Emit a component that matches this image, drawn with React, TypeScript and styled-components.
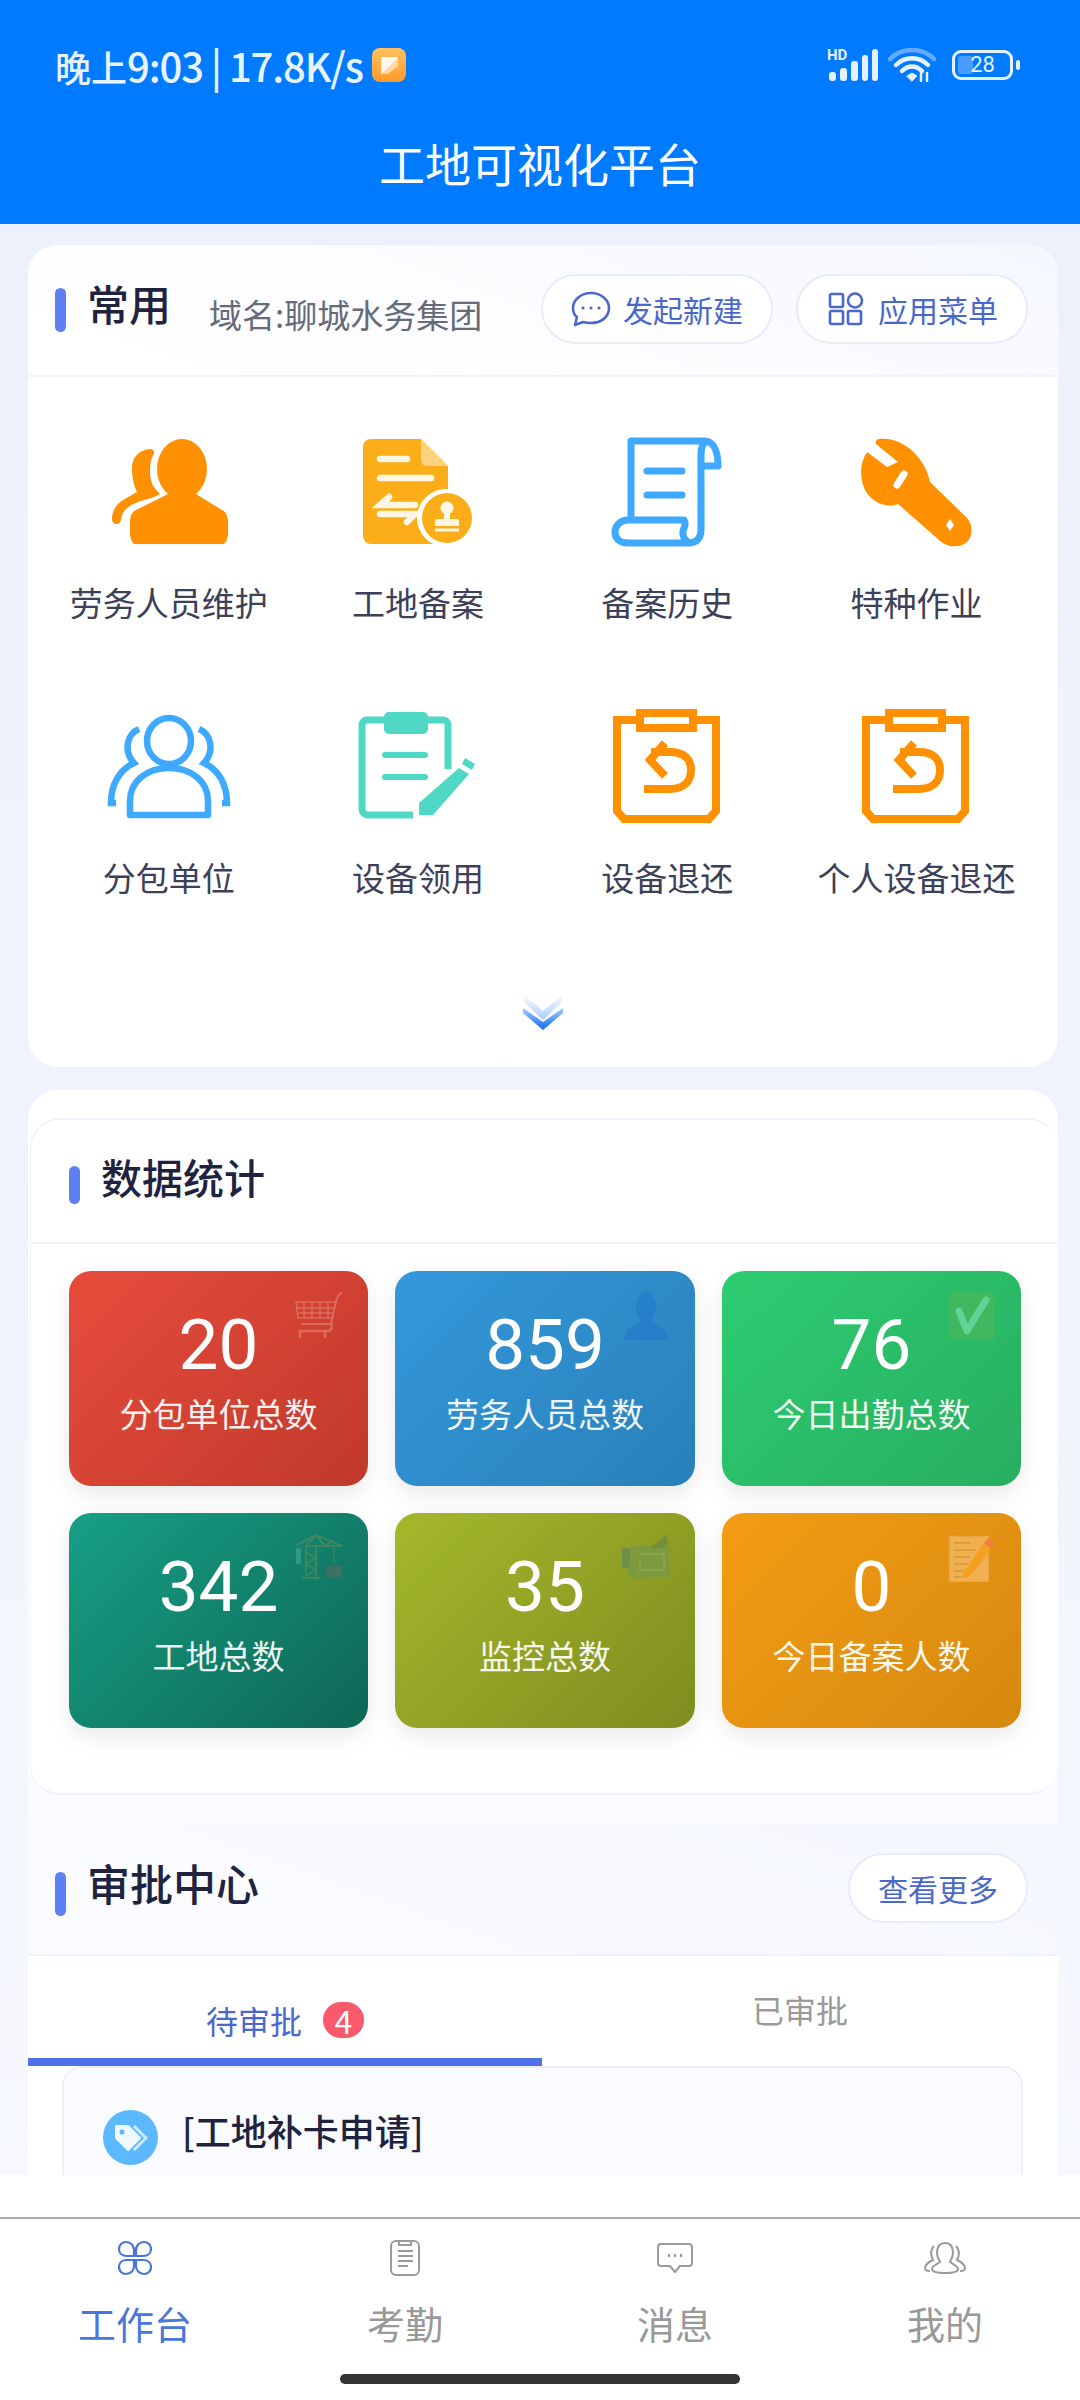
import React from "react";
import styled, { createGlobalStyle } from "styled-components";

const GlobalStyle = createGlobalStyle`
  html, body {
    margin: 0;
    padding: 0;
    background: #fff;
    font-family: "Noto Sans CJK SC", "Noto Sans", sans-serif;
  }
`;

const orange = "#ff9100";
const sky = "#3fa9ff";
const teal = "#4fd9c4";

function PeopleOrange() {
  return (
    <svg width="130" height="120" viewBox="0 0 130 120">
      <ellipse cx="78" cy="35" rx="25" ry="30" fill={orange} />
      <path
        d="M64 60 L32 76 C28 78 26 82 26 88 V100 C26 104 28 108 30 110 H120 C122 108 124 104 124 100 V88 C124 82 122 78 118 76 L92 60Z"
        fill={orange}
      />
      <path
        d="M46 15 C34 16 28 24 28 34 C28 44 30 52 33 58 C24 64 8 68 8 85 C8 91 16 92 17 86 C18 76 24 72 34 68 C42 65 50 64 56 60 C50 54 47 50 46 40 C46 30 47 24 50 20 C51 17 49 15 46 15Z"
        fill={orange}
      />
    </svg>
  );
}

function SiteRecord() {
  return (
    <svg width="130" height="120" viewBox="0 0 130 120">
      <path d="M18 5 H68 L95 32 V110 H18 a8 8 0 0 1-8-8 V13 a8 8 0 0 1 8-8Z" fill="#fbae17" />
      <path d="M68 5 L95 32 H74 a6 6 0 0 1-6-6Z" fill="#fdd27f" />
      <g stroke="#fff7e4" strokeWidth="6.5" strokeLinecap="round" fill="none">
        <path d="M27 25 H54" />
        <path d="M27 44 H78" />
        <path d="M36 63 L27 71 H62" />
        <path d="M27 80 H62 L54 88" />
      </g>
      <circle cx="93" cy="84" r="29" fill="#fff" />
      <circle cx="94" cy="84" r="25" fill="#fbae17" />
      <circle cx="94" cy="74" r="6.5" fill="#fff7e4" />
      <path d="M91 78 H97 V85 H104 a2 2 0 0 1 2 2 V92 H82 V87 a2 2 0 0 1 2-2 H91Z" fill="#fff7e4" />
      <path d="M82 96 H106" stroke="#fff7e4" strokeWidth="3" />
    </svg>
  );
}

function Scroll() {
  return (
    <svg width="130" height="120" viewBox="0 0 130 120" fill="none" stroke={sky} strokeWidth="7" strokeLinejoin="round">
      <path d="M29 86 V7 H102 C112 7 116 18 116 32 H99 V22 C99 14 100 10 105 7" />
      <path d="M99 32 V96 C99 105 94 109 86 109 H26 C17 109 13 104 13 98 C13 92 18 86 26 86 H82 C85 90 82 93 81 97 C80 103 84 109 90 109" />
      <path d="M45 37 H80 M45 61 H80" strokeLinecap="round" />
    </svg>
  );
}

function Wrench() {
  return (
    <svg width="130" height="120" viewBox="0 0 130 120">
      <path
        d="M28 5 C50 2 74 22 79 48 L116 84 C122 91 122 102 116 108 C110 114 96 114 88 106 L47 70 C36 74 22 70 14 56 C9 46 8 30 16 18 L36 33 L47 28 L25 10 C24 7 26 5 28 5Z"
        fill={orange}
      />
      <path d="M53 40 L46 51" stroke="#fff" strokeWidth="7" strokeLinecap="round" />
      <path d="M99 85 L103 91 L99 97 L95 91Z" fill="#fff" />
    </svg>
  );
}

function PeopleOutline() {
  return (
    <svg width="130" height="120" viewBox="0 0 130 120" fill="none" stroke={sky} strokeWidth="6.5">
      <ellipse cx="65" cy="32" rx="22" ry="23" />
      <path d="M26 106 V92 C26 72 43 59 65 59 C87 59 104 72 104 92 V106Z" strokeLinejoin="round" />
      <path d="M35 20 C23 25 19 42 30 54 C15 61 7 76 7 94 H12" />
      <path d="M95 20 C107 25 111 42 100 54 C115 61 123 76 123 94 H118" />
    </svg>
  );
}

function ClipboardPen() {
  return (
    <svg width="130" height="120" viewBox="0 0 130 120" fill="none">
      <path
        d="M31 11 H14 a5 5 0 0 0-5 5 V100 a6 6 0 0 0 6 6 H60 M75 11 H90 a5 5 0 0 1 5 5 V60"
        stroke={teal}
        strokeWidth="7"
      />
      <rect x="31" y="3" width="44" height="22" rx="5" fill={teal} />
      <path d="M32 46 H72 M32 68 H72" stroke={teal} strokeWidth="6" strokeLinecap="round" />
      <path d="M106 59 L116 65 L80 106 H66 V94Z" fill={teal} />
      <path d="M112 49 L122 55 L119 61 L109 55Z" fill={teal} />
    </svg>
  );
}

function ClipboardReturn() {
  return (
    <svg width="130" height="120" viewBox="0 0 130 120" fill="none" stroke={orange}>
      <path d="M34 11 H15 V102 L22 110 H107 L114 102 V11 H95" strokeWidth="8" />
      <rect x="38" y="4" width="53" height="15" strokeWidth="8" fill="#fff" />
      <path d="M42 80 H68 C82 80 89 72 89 61 C89 50 82 43 68 43 H49" strokeWidth="8" />
      <path d="M63 34 L48 51 L63 67" strokeWidth="8" />
    </svg>
  );
}

function ExpandChevron() {
  return (
    <svg width="42" height="36" viewBox="0 0 42 36" fill="none">
      <defs>
        <linearGradient id="chevronFade" x1="0" y1="0" x2="0" y2="1">
          <stop offset="0" stopColor="#0a6cf0" stopOpacity="0.02" />
          <stop offset="1" stopColor="#0a6cf0" stopOpacity="0.35" />
        </linearGradient>
        <linearGradient id="chevronSolid" x1="0" y1="0" x2="0" y2="1">
          <stop offset="0" stopColor="#a8cdfb" />
          <stop offset="1" stopColor="#0a6cf0" />
        </linearGradient>
      </defs>
      <path d="M2 1 L21 17 L40 1 L40 8 L21 26 L2 8Z" fill="url(#chevronFade)" />
      <path d="M1 14 L21 28 L41 14 L41 19 L21 36 L1 19Z" fill="url(#chevronSolid)" />
    </svg>
  );
}

const tiles = [
  { label: "劳务人员维护", icon: <PeopleOrange /> },
  { label: "工地备案", icon: <SiteRecord /> },
  { label: "备案历史", icon: <Scroll /> },
  { label: "特种作业", icon: <Wrench /> },
  { label: "分包单位", icon: <PeopleOutline /> },
  { label: "设备领用", icon: <ClipboardPen /> },
  { label: "设备退还", icon: <ClipboardReturn /> },
  { label: "个人设备退还", icon: <ClipboardReturn /> },
];

function CartMark() {
  return (
    <svg width="48" height="48" viewBox="0 0 48 48" fill="none" stroke="#f0a9a0" strokeWidth="2" opacity="0.4">
      <path d="M47 1 C43 2 42 5 41 9 L36 32 H6" />
      <path d="M1 10 H41 L37 26 H3Z M1 16 H39 M2 21 H38 M9 10 V26 M17 10 V26 M25 10 V26 M33 10 V26" strokeWidth="1.5" />
      <path d="M36 32 C38 36 36 39 32 39 H5 V46 M30 39 V46" strokeWidth="2.5" />
    </svg>
  );
}

function PersonMark() {
  return (
    <svg width="48" height="48" viewBox="0 0 48 48" fill="#1f78cc" opacity="0.55">
      <ellipse cx="24" cy="15" rx="10" ry="15" />
      <path d="M19 28 H29 L44 40 L46 48 H2 L4 40Z" />
    </svg>
  );
}

function CheckMark() {
  return (
    <svg width="48" height="48" viewBox="0 0 48 48">
      <rect x="1" y="0" width="46" height="48" rx="5" fill="#3fb85f" />
      <path d="M11 19 L19 39 L38 8" stroke="#63d395" strokeWidth="7" fill="none" strokeLinecap="round" strokeLinejoin="round" />
    </svg>
  );
}

function CraneMark() {
  return (
    <svg width="50" height="46" viewBox="0 0 50 46" fill="none" stroke="#4a8a5c" strokeWidth="2" opacity="0.8">
      <path d="M13 12 H49 L23 1 L2 12 M13 12 L23 1 L32 12 L40 6 M13 12 V44 M23 12 V44 M13 18 L23 24 L13 30 L23 36 L13 42 M9 44 H27" />
      <path d="M41 12 V30" strokeWidth="1" />
      <rect x="33" y="32" width="16" height="11" fill="#4a6f62" stroke="none" />
      <rect x="3" y="14" width="5" height="16" fill="#3c9d8d" stroke="none" />
    </svg>
  );
}

function CameraMark() {
  return (
    <svg width="48" height="44" viewBox="0 0 48 44">
      <rect x="6" y="12" width="41" height="32" rx="5" fill="#7d9a3f" />
      <rect x="0" y="14" width="8" height="20" rx="3" fill="#6c9146" />
      <path d="M28 14 L40 4 L44 0 L46 10 L38 14Z" fill="#758d3a" />
      <path d="M18 20 H42 V36 H18 V28" stroke="#8ca548" strokeWidth="2" fill="none" />
    </svg>
  );
}

function MemoMark() {
  return (
    <svg width="48" height="48" viewBox="0 0 48 48">
      <rect x="1" y="2" width="40" height="46" fill="#f0b050" stroke="#dd9a3e" />
      <path d="M6 9 H22 M6 16 H28 M6 23 H22 M6 30 H20 M6 37 H16 M6 43 H14" stroke="#c98a2e" strokeWidth="1.2" />
      <path d="M40 4 L47 10 L22 42 L15 45 L16 37Z" fill="#f5a01e" />
      <path d="M40 4 L47 10 L43 15 L36 9Z" fill="#ef7f3c" />
    </svg>
  );
}

const stats = [
  { value: "20", label: "分包单位总数", from: "#e74c3c", to: "#c0392b", mark: <CartMark /> },
  { value: "859", label: "劳务人员总数", from: "#3498db", to: "#2980b9", mark: <PersonMark /> },
  { value: "76", label: "今日出勤总数", from: "#2ecc71", to: "#27ae60", mark: <CheckMark /> },
  { value: "342", label: "工地总数", from: "#16a085", to: "#0e6655", mark: <CraneMark /> },
  { value: "35", label: "监控总数", from: "#a4b82c", to: "#7f8c1f", mark: <CameraMark /> },
  { value: "0", label: "今日备案人数", from: "#f39c12", to: "#d68910", mark: <MemoMark /> },
];

function SignalIcon() {
  return (
    <svg width="52" height="42" viewBox="0 -4 52 42" fill="#e6f1ff">
      <rect x="2" y="24" width="7" height="9" rx="3" />
      <rect x="13" y="20" width="7" height="13" rx="3" />
      <rect x="24" y="13" width="7" height="20" rx="3" />
      <rect x="35" y="7" width="6" height="26" rx="3" />
      <rect x="45" y="1" width="6" height="32" rx="3" />
      <text x="0" y="12" fontSize="15" fontWeight="700" fontFamily="Roboto, sans-serif">HD</text>
    </svg>
  );
}

function WifiIcon() {
  return (
    <svg width="48" height="34" viewBox="0 0 48 34" fill="none" strokeLinecap="round">
      <path d="M2 11 C14 -1 34 -1 46 11" stroke="#66abff" strokeWidth="4.5" />
      <path d="M8 17 C17 8 31 8 40 17" stroke="#e6f1ff" strokeWidth="4.5" />
      <path d="M14 23 C20 17 28 17 34 23" stroke="#e6f1ff" strokeWidth="4.5" />
      <path d="M19 28 L24 25 L29 28 L24 33Z" fill="#e6f1ff" stroke="#e6f1ff" />
      <path d="M33 33 V25 M39 33 V25" stroke="#e6f1ff" strokeWidth="2.5" />
    </svg>
  );
}

function NoteBadge() {
  return (
    <svg width="34" height="34" viewBox="0 0 34 34">
      <defs>
        <linearGradient id="noteBg" x1="0" y1="0" x2="0" y2="1">
          <stop offset="0" stopColor="#ffc25e" />
          <stop offset="1" stopColor="#ff9a2a" />
        </linearGradient>
      </defs>
      <rect width="34" height="34" rx="8" fill="url(#noteBg)" />
      <path d="M9 9 H26 V18 L15 26 H9Z" fill="#fff" opacity="0.9" />
      <path d="M9 26 L26 10 V18 L16 26Z" fill="#ffd9a1" />
    </svg>
  );
}

function ChatIcon() {
  return (
    <svg width="40" height="36" viewBox="0 0 40 36" fill="none" stroke="#4a68cc" strokeWidth="2.6">
      <path d="M20 2 C30 2 38 9 38 17 C38 26 30 32 20 32 C17 32 14 31.5 12 31 L4 34 L6 26 C3 24 2 21 2 17 C2 9 10 2 20 2Z" strokeLinejoin="round" />
      <circle cx="12" cy="17" r="1.6" fill="#4a68cc" stroke="none" />
      <circle cx="20" cy="17" r="1.6" fill="#4a68cc" stroke="none" />
      <circle cx="28" cy="17" r="1.6" fill="#4a68cc" stroke="none" />
    </svg>
  );
}

function MenuIcon() {
  return (
    <svg width="40" height="34" viewBox="-2 0 40 34" fill="none" stroke="#4a68cc" strokeWidth="2.6">
      <rect x="2" y="2" width="13" height="13" rx="1.5" />
      <circle cx="27" cy="8.5" r="7" />
      <rect x="2" y="19" width="13" height="13" rx="1.5" />
      <rect x="20" y="19" width="13" height="13" rx="1.5" />
    </svg>
  );
}

function TagIcon() {
  return (
    <svg width="34" height="30" viewBox="0 0 34 30">
      <path d="M2 3 H14 L26 15 L14 27 L2 15Z" fill="#fff" opacity="0.9" strokeLinejoin="round" stroke="#fff" strokeWidth="2" />
      <circle cx="8" cy="9" r="2.5" fill="#5cb9ff" />
      <path d="M20 3 L32 15 L20 27" stroke="#fff" opacity="0.7" strokeWidth="3" fill="none" />
    </svg>
  );
}

function PetalIcon() {
  return (
    <svg width="34" height="36" viewBox="0 0 34 36" fill="none" stroke="#4a76d9" strokeWidth="2.2">
      <path d="M16 16 H9 C4 16 1 13 1 9 C1 5 4 2 8 2 C13 2 16 6 16 10Z" />
      <path d="M18 16 H25 C30 16 33 13 33 9 C33 5 30 2 26 2 C21 2 18 6 18 10Z" />
      <path d="M16 20 H9 C4 20 1 23 1 27 C1 31 4 34 8 34 C13 34 16 30 16 26Z" />
      <path d="M18 20 H25 C30 20 33 23 33 27 C33 31 30 34 26 34 C21 34 18 30 18 26Z" />
    </svg>
  );
}

function ReportIcon() {
  return (
    <svg width="30" height="36" viewBox="0 0 30 36" fill="none" stroke="#9a9a9a" strokeWidth="2">
      <rect x="1" y="1" width="28" height="34" rx="5" />
      <path d="M9 1 V5 H21 V1 M8 11 H23 M8 16 H23 M8 21 H23 M8 26 H18" />
    </svg>
  );
}

function BubbleIcon() {
  return (
    <svg width="36" height="30" viewBox="0 0 36 30" fill="none" stroke="#9a9a9a" strokeWidth="2">
      <path d="M4 1 H32 a3 3 0 0 1 3 3 V20 a3 3 0 0 1-3 3 H23 L18 29 L13 23 H4 a3 3 0 0 1-3-3 V4 a3 3 0 0 1 3-3Z" strokeLinejoin="round" />
      <path d="M12 12 V13 M18 12 V13 M24 12 V13" strokeWidth="2.4" strokeLinecap="round" />
    </svg>
  );
}

function GroupIcon() {
  return (
    <svg width="42" height="32" viewBox="0 0 42 32" fill="none" stroke="#9a9a9a" strokeWidth="2">
      <path d="M21 1 C27 1 29 6 29 11 C29 15 27 18 26 20 C30 23 34 24 34 27 C34 30 28 31 21 31 C14 31 8 30 8 27 C8 24 12 23 16 20 C15 18 13 15 13 11 C13 6 15 1 21 1Z" />
      <path d="M10 4 C6 8 7 14 9 18 C5 20 1 22 1 26 C1 28 3 29 6 29 M32 4 C36 8 35 14 33 18 C37 20 41 22 41 26 C41 28 39 29 36 29" />
    </svg>
  );
}

const navItems = [
  { label: "工作台", active: true, icon: <PetalIcon /> },
  { label: "考勤", active: false, icon: <ReportIcon /> },
  { label: "消息", active: false, icon: <BubbleIcon /> },
  { label: "我的", active: false, icon: <GroupIcon /> },
];

export default function App() {
  return (
    <Page>
      <GlobalStyle />
      <TopBar>
        <StatusBar>
          <StatusLeft>
            <StatusText>
              晚上<StatusDigits>9:03 | 17.8K/s</StatusDigits>
            </StatusText>
            <NoteBadge />
          </StatusLeft>
          <StatusRight>
            <SignalIcon />
            <WifiIcon />
            <Battery>
              <BatteryFill />
              <BatteryText>28</BatteryText>
            </Battery>
            <BatteryNub />
          </StatusRight>
        </StatusBar>
        <PageTitle>工地可视化平台</PageTitle>
      </TopBar>

      <Content>
        <Card>
          <CardHeader>
            <TitleBar />
            <SectionTitle $size={42} $lift={15}>常用</SectionTitle>
            <Domain>域名:聊城水务集团</Domain>
            <HeaderActions>
              <PillButton>
                <ChatIcon />
                发起新建
              </PillButton>
              <PillButton>
                <MenuIcon />
                应用菜单
              </PillButton>
            </HeaderActions>
          </CardHeader>
          <TileGrid>
            {tiles.map((tile) => (
              <Tile key={tile.label}>
                {tile.icon}
                <TileLabel>{tile.label}</TileLabel>
              </Tile>
            ))}
          </TileGrid>
          <ExpandRow>
            <ExpandChevron />
          </ExpandRow>
        </Card>

        <OuterCard>
          <StatsPanel>
            <StatsHeader>
              <TitleBar $drop={8} $height={38} />
              <SectionTitle $size={41} $lift={10}>数据统计</SectionTitle>
            </StatsHeader>
            <StatsGrid>
              {stats.map((stat) => (
                <StatTile key={stat.label} $from={stat.from} $to={stat.to}>
                  <StatMark>{stat.mark}</StatMark>
                  <StatValue>{stat.value}</StatValue>
                  <StatLabel>{stat.label}</StatLabel>
                </StatTile>
              ))}
            </StatsGrid>
          </StatsPanel>

          <ApprovalHeader>
            <TitleBar $drop={9} />
            <SectionTitle $size={43} $lift={14}>审批中心</SectionTitle>
            <HeaderActions>
              <PillButton>查看更多</PillButton>
            </HeaderActions>
          </ApprovalHeader>
          <TabRow>
            <TabItem $active>
              待审批
              <CountBadge>4</CountBadge>
            </TabItem>
            <TabItem>已审批</TabItem>
          </TabRow>
          <ApprovalBody>
            <ApprovalItem>
              <TagCircle>
                <TagIcon />
              </TagCircle>
              <ApprovalTitle>[工地补卡申请]</ApprovalTitle>
            </ApprovalItem>
          </ApprovalBody>
        </OuterCard>
      </Content>

      <BottomArea>
        <NavBar>
          {navItems.map((item) => (
            <NavItem key={item.label} $active={item.active}>
              <NavIcon>{item.icon}</NavIcon>
              {item.label}
            </NavItem>
          ))}
        </NavBar>
        <HomeBar />
      </BottomArea>
    </Page>
  );
}

const Page = styled.div`
  width: 1080px;
  height: 2400px;
  display: flex;
  flex-direction: column;
  overflow: hidden;
  background: #fff;
`;

const TopBar = styled.header`
  height: 224px;
  flex: none;
  box-sizing: border-box;
  padding-top: 44px;
  background: #007bff;
  color: #fff;
`;

const StatusBar = styled.div`
  height: 42px;
  display: flex;
  align-items: center;
  justify-content: space-between;
  padding: 0 60px 0 55px;
`;

const StatusLeft = styled.div`
  display: flex;
  align-items: center;
  gap: 9px;
`;

const StatusText = styled.span`
  font-size: 36px;
  line-height: 42px;
  font-weight: 500;
  color: #e8f3ff;
  white-space: nowrap;
`;

const StatusDigits = styled.span`
  font-size: 40px;
  letter-spacing: -1.1px;
`;

const StatusRight = styled.div`
  display: flex;
  align-items: center;
  gap: 9px;
`;

const Battery = styled.div`
  position: relative;
  width: 61px;
  height: 30px;
  margin-left: 7px;
  box-sizing: border-box;
  border: 3px solid #e6f1ff;
  border-radius: 9px;
  display: flex;
  align-items: center;
  justify-content: center;
`;

const BatteryFill = styled.div`
  position: absolute;
  left: 3px;
  top: 3px;
  bottom: 3px;
  width: 15px;
  border-radius: 3px;
  background: #4a9cff;
`;

const BatteryText = styled.span`
  position: relative;
  font-family: Roboto, sans-serif;
  font-size: 22px;
  line-height: 24px;
  color: #e6f1ff;
`;

const BatteryNub = styled.div`
  width: 4px;
  height: 10px;
  margin-left: -6px;
  border-radius: 2px;
  background: #e6f1ff;
`;

const PageTitle = styled.h1`
  margin: 46px 0 0;
  text-align: center;
  font-size: 46px;
  line-height: 60px;
  font-weight: 400;
  color: #fff;
`;

const Content = styled.main`
  height: 1951px;
  flex: none;
  box-sizing: border-box;
  padding: 21px 22px 0 28px;
  overflow: hidden;
  background: linear-gradient(180deg, #edf1fc 0%, #f0f3fc 45%, #f6f8fe 100%);
`;

const Card = styled.section`
  height: 822px;
  box-sizing: border-box;
  border-radius: 30px;
  background: #fff;
  overflow: hidden;
`;

const CardHeader = styled.div`
  height: 132px;
  box-sizing: border-box;
  display: flex;
  align-items: center;
  padding: 0 30px 0 27px;
  border-bottom: 2px solid #f0f3fb;
  background: linear-gradient(200deg, #f4f7fe 0%, #fdfdff 60%, #fff 100%);
`;

const TitleBar = styled.span<{ $drop?: number; $height?: number }>`
  flex: none;
  width: 11px;
  height: ${(p) => p.$height ?? 44}px;
  margin-top: ${(p) => p.$drop ?? 0}px;
  border-radius: 6px;
  background: #5c7ff2;
`;

const SectionTitle = styled.h2<{ $size: number; $lift: number }>`
  margin: ${(p) => -p.$lift}px 0 0 21px;
  font-size: ${(p) => p.$size}px;
  line-height: 56px;
  font-weight: 500;
  color: #1f2340;
  white-space: nowrap;
`;

const Domain = styled.span`
  margin: 8px 0 0 38px;
  font-size: 33px;
  line-height: 44px;
  color: #666b78;
  white-space: nowrap;
`;

const HeaderActions = styled.div`
  margin-left: auto;
  margin-top: -2px;
  display: flex;
  gap: 23px;
`;

const PillButton = styled.button`
  height: 70px;
  display: flex;
  align-items: center;
  gap: 12px;
  box-sizing: border-box;
  padding: 0 28px;
  border: 2px solid #e7ecfa;
  border-radius: 35px;
  background: #fff;
  font: inherit;
  font-size: 30px;
  color: #4a68cc;
  white-space: nowrap;
`;

const TileGrid = styled.div`
  display: grid;
  grid-template-columns: repeat(4, 1fr);
  row-gap: 87px;
  padding: 57px 17px 0 16px;
`;

const Tile = styled.div`
  display: flex;
  flex-direction: column;
  align-items: center;
  gap: 28px;
`;

const TileLabel = styled.span`
  font-size: 33px;
  line-height: 40px;
  color: #3c4059;
  white-space: nowrap;
`;

const ExpandRow = styled.div`
  display: flex;
  justify-content: center;
  margin-top: 97px;
`;

const OuterCard = styled.section`
  margin-top: 23px;
  padding-top: 28px;
  border-radius: 30px 30px 0 0;
  background: linear-gradient(180deg, #fff 0%, #fbfcff 50%, #f7f9fe 100%);
`;

const StatsPanel = styled.div`
  height: 677px;
  box-sizing: border-box;
  margin-left: 2px;
  border-top: 2px solid #f0f3fc;
  border-bottom: 2px solid #f0f3fc;
  border-left: 1px solid #f0f3fc;
  border-radius: 30px;
  background: #fff;
`;

const StatsHeader = styled.div`
  height: 124px;
  box-sizing: border-box;
  display: flex;
  align-items: center;
  padding-left: 38px;
  border-bottom: 2px solid #f0f3fc;
`;

const StatsGrid = styled.div`
  display: grid;
  grid-template-columns: 299px 300px 299px;
  grid-auto-rows: 215px;
  gap: 27px;
  padding: 27px 0 0 38px;
`;

const StatTile = styled.div<{ $from: string; $to: string }>`
  position: relative;
  display: flex;
  flex-direction: column;
  align-items: center;
  padding-top: 32px;
  box-sizing: border-box;
  border-radius: 22px;
  background: linear-gradient(135deg, ${(p) => p.$from}, ${(p) => p.$to});
  box-shadow: 0 8px 24px rgba(0, 0, 0, 0.09);
  color: #fff;
`;

const StatMark = styled.div`
  position: absolute;
  top: 21px;
  right: 25px;
  display: flex;
`;

const StatValue = styled.span`
  position: relative;
  font-family: Roboto, sans-serif;
  font-size: 71px;
  line-height: 84px;
  font-weight: 400;
`;

const StatLabel = styled.span`
  margin-top: 4px;
  font-size: 33px;
  line-height: 44px;
  opacity: 0.92;
  white-space: nowrap;
`;

const ApprovalHeader = styled.div`
  height: 132px;
  margin-top: 29px;
  box-sizing: border-box;
  display: flex;
  align-items: center;
  padding: 0 30px 0 27px;
  border-bottom: 2px solid #eff2fb;
  background: linear-gradient(200deg, #f3f6fd 0%, #fafbff 70%);
`;

const TabRow = styled.div`
  height: 110px;
  display: grid;
  grid-template-columns: 514px 1fr;
  background: #fff;
`;

const TabItem = styled.div<{ $active?: boolean }>`
  display: flex;
  align-items: center;
  justify-content: center;
  gap: 21px;
  box-sizing: border-box;
  padding-top: ${(p) => (p.$active ? 25 : 12)}px;
  padding-bottom: ${(p) => (p.$active ? 0 : 8)}px;
  font-size: 32px;
  color: ${(p) => (p.$active ? "#4a68cc" : "#9a9a9a")};
  border-bottom: 8px solid ${(p) => (p.$active ? "#4f70e8" : "transparent")};
`;

const CountBadge = styled.span`
  width: 41px;
  height: 36px;
  border-radius: 18px;
  background: #f9596b;
  color: #fff;
  font-size: 32px;
  line-height: 36px;
  text-align: center;
`;

const ApprovalBody = styled.div`
  padding: 0 35px 0 34px;
  background: #fff;
`;

const ApprovalItem = styled.article`
  height: 160px;
  box-sizing: border-box;
  display: flex;
  align-items: flex-start;
  gap: 24px;
  padding: 42px 0 0 39px;
  border: 2px solid #edf0f8;
  border-radius: 20px;
  background: #f9fbff;
`;

const TagCircle = styled.div`
  width: 55px;
  height: 55px;
  border-radius: 50%;
  background: #5cb9ff;
  display: flex;
  align-items: center;
  justify-content: center;
`;

const ApprovalTitle = styled.h3`
  margin: 0;
  font-size: 36px;
  line-height: 40px;
  font-weight: 500;
  color: #1f2340;
  white-space: nowrap;
`;

const BottomArea = styled.footer`
  flex: 1;
  background: #fff;
  padding-top: 42px;
  display: flex;
  flex-direction: column;
  align-items: center;
`;

const NavBar = styled.nav`
  align-self: stretch;
  display: grid;
  grid-template-columns: repeat(4, 1fr);
  border-top: 2px solid #aaa;
  padding-top: 20px;
`;

const NavItem = styled.div<{ $active?: boolean }>`
  display: flex;
  flex-direction: column;
  align-items: center;
  font-size: 38px;
  line-height: 42px;
  color: ${(p) => (p.$active ? "#4a76d9" : "#999")};
`;

const NavIcon = styled.div`
  height: 38px;
  margin-bottom: 25px;
  display: flex;
  align-items: center;
`;

const HomeBar = styled.div`
  width: 400px;
  height: 10px;
  margin-top: 30px;
  border-radius: 5px;
  background: #333;
`;
